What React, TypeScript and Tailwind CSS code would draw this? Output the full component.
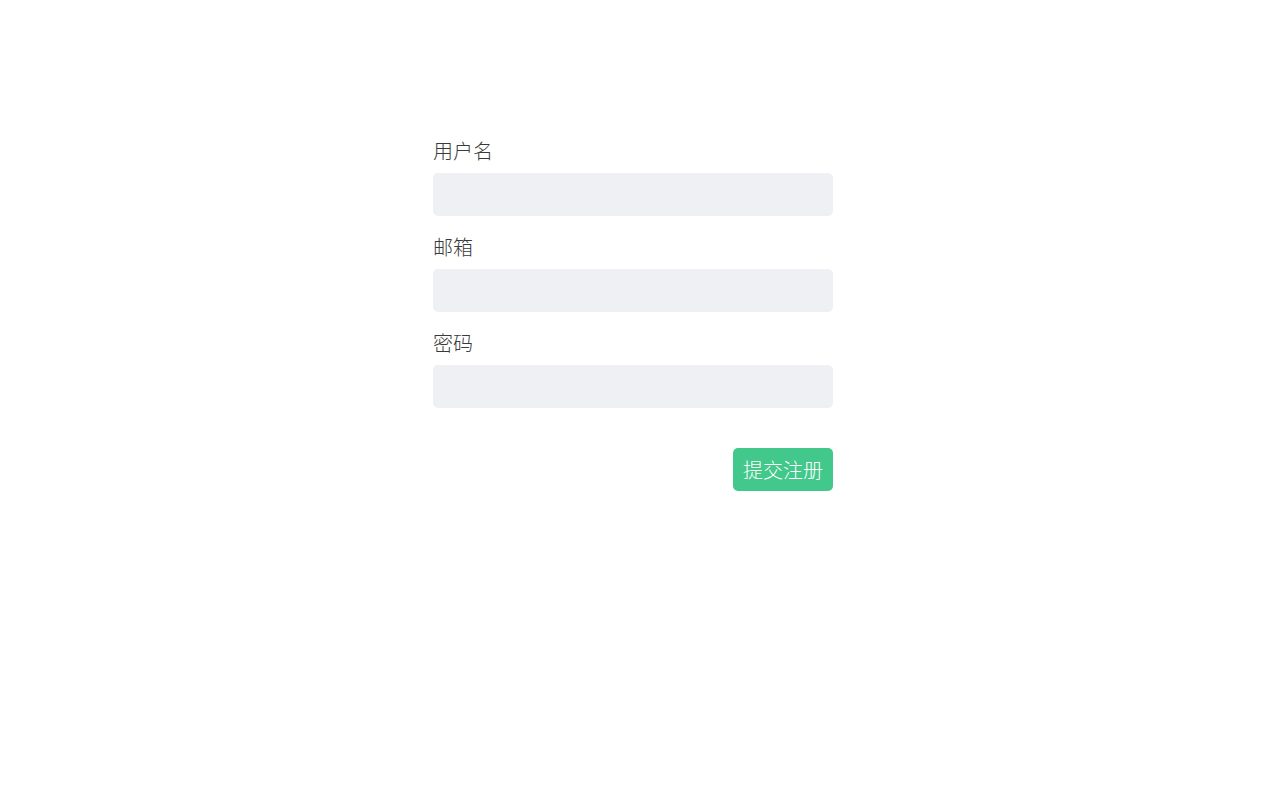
export default function App() {
  const fields = [
    { label: '用户名', type: 'text' },
    { label: '邮箱', type: 'email' },
    { label: '密码', type: 'password' },
  ];

  return (
    <div
      className="min-h-screen bg-white pt-[136px] flex justify-center font-light"
      style={{ fontFamily: '"Noto Sans CJK SC", "Noto Sans", sans-serif' }}
    >
      <div className="w-[414px] pr-[14px]">
        <form className="w-[400px]" onSubmit={(e) => e.preventDefault()}>
          {fields.map((f) => (
            <div key={f.label} className="mb-4">
              <label className="block text-[20px] leading-[30px] text-[#3a3a3a] mb-[7px]">{f.label}</label>
              <input
                type={f.type}
                className="block w-full h-[43px] rounded-[5px] bg-[#eff0f4] border-0 outline-none px-3 text-[18px]"
              />
            </div>
          ))}
          <div className="flex justify-end pt-6">
            <button
              type="submit"
              className="h-[43px] w-[100px] rounded-[5px] bg-[#42c88a] text-white text-[20px] leading-[30px] font-light"
            >
              提交注册
            </button>
          </div>
        </form>
      </div>
    </div>
  );
}
